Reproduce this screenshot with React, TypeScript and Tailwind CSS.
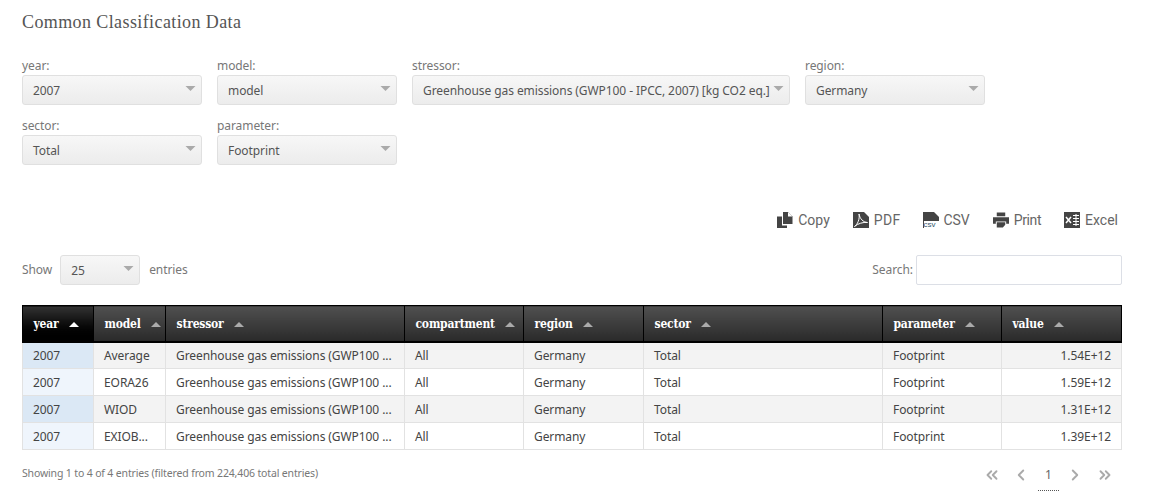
import type { ReactNode } from "react";
import { ChevronLeft, ChevronRight, ChevronsLeft, ChevronsRight } from "lucide-react";

const rows = [
  { model: "Average", value: "1.54E+12" },
  { model: "EORA26", value: "1.59E+12" },
  { model: "WIOD", value: "1.31E+12" },
  { model: "EXIOB...", value: "1.39E+12" },
];

const columns = [
  { name: "year", width: "w-[71px]" },
  { name: "model", width: "w-[72px]" },
  { name: "stressor", width: "w-[239px]" },
  { name: "compartment", width: "w-[119px]" },
  { name: "region", width: "w-[120px]" },
  { name: "sector", width: "w-[239px]" },
  { name: "parameter", width: "w-[119px]" },
  { name: "value", width: "w-[120px]" },
];

function SelectBox({ value, className }: { value: string; className?: string }) {
  return (
    <div
      className={`h-[30px] rounded-[3px] border border-[#e0e0e0] bg-gradient-to-b from-[#f7f7f7] to-[#ececec] pl-[10px] pr-[4px] flex items-center justify-between text-[#555] ${className ?? ""}`}
    >
      <span className="whitespace-nowrap pt-[2px]">{value}</span>
      <svg viewBox="0 0 10 5" className="w-[11px] h-[5px] text-[#aaa] shrink-0 -mt-[3px] mr-[1px]">
        <path d="M0 0 L10 0 L5 5 Z" fill="currentColor" />
      </svg>
    </div>
  );
}

function Select({ label, value, width }: { label: string; value: string; width: string }) {
  return (
    <div className={`${width} flex flex-col`}>
      <label className="h-[20px] pt-[1px] leading-[20px] text-[#777]">{label}</label>
      <SelectBox value={value} />
    </div>
  );
}

function ToolButton({ icon, label, labelClass }: { icon: ReactNode; label: string; labelClass?: string }) {
  return (
    <div className="flex items-center gap-[5px] text-[14px] text-[#666] font-['Roboto',sans-serif] tracking-normal">
      {icon}
      <span className={labelClass}>{label}</span>
    </div>
  );
}

export default function App() {
  return (
    <div className="w-[1166px] h-[494px] overflow-hidden bg-white pl-[22px] text-[12px] tracking-[-0.08px] font-['Noto_Sans',sans-serif] text-[#444]">
      <div className="w-[1100px]">
        <h1 className="pt-[11px] h-[55px] text-[18px] leading-[22px] text-[#555] font-['Liberation_Serif',serif] tracking-[0.4px] font-normal">
          Common Classification Data
        </h1>

        <div className="flex flex-wrap gap-x-[15px] gap-y-[10px] w-[1000px]">
          <Select label="year:" value="2007" width="w-[180px]" />
          <Select label="model:" value="model" width="w-[180px]" />
          <Select label="stressor:" value="Greenhouse gas emissions (GWP100 - IPCC, 2007) [kg CO2 eq.]" width="w-[378px]" />
          <Select label="region:" value="Germany" width="w-[180px]" />
          <Select label="sector:" value="Total" width="w-[180px]" />
          <Select label="parameter:" value="Footprint" width="w-[180px]" />
        </div>

        <div className="mt-[44px] flex justify-end gap-[23px] pr-[4px] h-[22px]">
          <ToolButton
            label="Copy"
            icon={
              <svg viewBox="0 0 16 16" className="w-[16px] h-[16px] text-[#444]">
                <path d="M6 0 H11 L15.5 4.5 V12 H6 Z" fill="currentColor" />
                <path d="M11 0 V4.5 H15.5" fill="#fff" />
                <path d="M0 4.5 H5 V13.5 H10 V16 H0 Z" fill="currentColor" />
              </svg>
            }
          />
          <ToolButton
            label="PDF"
            labelClass="tracking-[0.3px]"
            icon={
              <svg viewBox="0 0 16 16" className="w-[16px] h-[16px] text-[#444]">
                <path d="M0 0 H11 L16 5 V16 H0 Z" fill="currentColor" />
                <path d="M1.5 14.5 C4.5 12.5 7 7 6 2 C7 7 10 10 14.5 10.5 C10 10 5 11.5 1.5 14.5 Z" fill="none" stroke="#fff" strokeWidth="1" />
              </svg>
            }
          />
          <ToolButton
            label="CSV"
            labelClass="-ml-[1px]"
            icon={
              <svg viewBox="0 0 16 16" className="w-[16px] h-[16px] text-[#444]">
                <path d="M0 0 H11 L16 5 V16 H0 Z" fill="currentColor" />
                <rect x="1" y="9" width="15" height="7" fill="#fff" />
                <text x="0.5" y="15" fontSize="8" fill="#35566e" fontFamily="Liberation Sans, sans-serif">csv</text>
              </svg>
            }
          />
          <ToolButton
            label="Print"
            labelClass="tracking-[-0.4px]"
            icon={
              <svg viewBox="0 0 17 16" className="w-[16px] h-[16px] text-[#444]">
                <path d="M4 0 H13 V4 H4 Z M0 5 H17 V12 H14 V9.5 H3 V12 H0 Z M4 10.5 H13 V13 L10.5 16 H4 Z" fill="currentColor" />
              </svg>
            }
          />
          <ToolButton
            label="Excel"
            icon={
              <svg viewBox="0 0 16 16" className="w-[16px] h-[16px] text-[#444]">
                <path d="M0 0 H16 V16 H0 Z" fill="currentColor" />
                <path d="M2 5 L7 11 M7 5 L2 11" stroke="#fff" strokeWidth="1.5" />
                <path d="M9 3.5 H15 M9 6.5 H15 M9 9.5 H15 M9 12.5 H15 M12 2 V14" stroke="#fff" strokeWidth="1" />
              </svg>
            }
          />
        </div>

        <div className="mt-[24px] flex items-center justify-between h-[30px] text-[#777]">
          <div className="flex items-center">
            <span>Show</span>
            <SelectBox value="25" className="ml-[8px] w-[80px]" />
            <span className="ml-[9px]">entries</span>
          </div>
          <div className="flex items-center gap-[3px]">
            <span>Search:</span>
            <div className="w-[206px] h-[30px] rounded-[2px] border border-[#dcdfe6] bg-white" />
          </div>
        </div>

        <table className="mt-[20px] w-[1100px] table-fixed border-collapse text-[#444]">
          <thead>
            <tr className="h-[36px]">
              {columns.map((col, i) => (
                <th
                  key={col.name}
                  className={`${col.width} border border-b-2 border-black pl-[10.5px] pt-[2px] text-left font-bold text-white text-[12px] tracking-[-0.2px] font-['DejaVu_Serif_Condensed','DejaVu_Serif',serif] ${
                    i === 0
                      ? "bg-gradient-to-b from-[#333] to-black"
                      : "bg-gradient-to-b from-[#505050] to-[#2a2a2a]"
                  }`}
                >
                  <span className="inline-flex items-center gap-[10px]">
                    {col.name}
                    <svg viewBox="0 0 10 5" className={`w-[10px] h-[5px] ${i === 0 ? "text-white" : "text-[#aaa]"}`}>
                      <path d="M0 5 L5 0 L10 5 Z" fill="currentColor" />
                    </svg>
                  </span>
                </th>
              ))}
            </tr>
          </thead>
          <tbody>
            {rows.map((row, i) => (
              <tr key={row.model} className={`h-[27px] ${i % 2 === 0 ? "bg-[#f3f3f3]" : "bg-white"}`}>
                <td className={`border border-[#e2e2e2] pl-[10px] pt-[2px] ${i % 2 === 0 ? "bg-[#dbe8f5]" : "bg-[#eff5fc]"}`}>2007</td>
                <td className="border border-[#e2e2e2] pl-[10px] pt-[2px]">{row.model}</td>
                <td className="border border-[#e2e2e2] pl-[10px] pt-[2px] whitespace-nowrap overflow-hidden">Greenhouse gas emissions (GWP100 ...</td>
                <td className="border border-[#e2e2e2] pl-[10px] pt-[2px]">All</td>
                <td className="border border-[#e2e2e2] pl-[10px] pt-[2px]">Germany</td>
                <td className="border border-[#e2e2e2] pl-[10px] pt-[2px]">Total</td>
                <td className="border border-[#e2e2e2] pl-[10px] pt-[2px]">Footprint</td>
                <td className="border border-[#e2e2e2] pr-[10px] pt-[2px] text-right">{row.value}</td>
              </tr>
            ))}
          </tbody>
        </table>

        <div className="mt-[14px] flex items-start justify-between">
          <span className="text-[10.5px] leading-[18px] tracking-[-0.15px] text-[#777]">
            Showing 1 to 4 of 4 entries (filtered from 224,406 total entries)
          </span>
          <div className="flex items-start pr-[8px] text-[#aaa]">
            <ChevronsLeft size={18} strokeWidth={2.5} className="mt-[2px]" />
            <ChevronLeft size={18} strokeWidth={2.5} className="mt-[2px] ml-[11px]" />
            <span className="ml-[8px] w-[21px] pb-[4px] border-b border-dotted border-[#555] text-center text-[12px] text-[#666] leading-[22px]">1</span>
            <ChevronRight size={18} strokeWidth={2.5} className="mt-[2px] ml-[7px]" />
            <ChevronsRight size={18} strokeWidth={2.5} className="mt-[2px] ml-[12px]" />
          </div>
        </div>
      </div>
    </div>
  );
}
